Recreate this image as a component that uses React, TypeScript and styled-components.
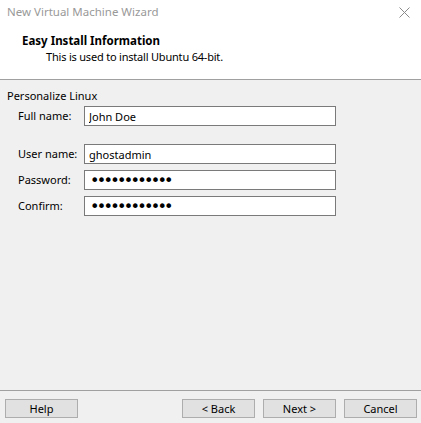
import styled, { createGlobalStyle } from 'styled-components';

const GlobalStyle = createGlobalStyle`
  html, body {
    margin: 0;
    padding: 0;
    background: #f0f0f0;
  }
  body {
    font-family: "Noto Sans", "Open Sans", sans-serif;
    font-size: 11px;
    color: #000;
  }
`;

const Window = styled.div`
  width: 421px;
  height: 423px;
  display: flex;
  flex-direction: column;
  background: #f0f0f0;
  overflow: hidden;
`;

const Header = styled.div`
  height: 79px;
  background: #fff;
  border-bottom: 1px solid #a0a0a0;
  display: flex;
  flex-direction: column;
`;

const TitleBar = styled.div`
  height: 24px;
  display: flex;
  align-items: center;
  justify-content: space-between;
  padding-left: 7px;
`;

const TitleText = styled.span`
  color: #999;
  font-size: 11.5px;
  line-height: 16px;
`;

const CloseButton = styled.button`
  width: 34px;
  height: 24px;
  border: none;
  background: transparent;
  padding: 0;
  display: flex;
  align-items: center;
  justify-content: center;
`;

const HeaderContent = styled.div`
  padding: 9px 0 0 22px;
  line-height: 16px;
`;

const Heading = styled.div`
  font-weight: bold;
  font-size: 11.5px;
`;

const SubHeading = styled.div`
  padding-left: 24px;
  letter-spacing: -0.2px;
`;

const Body = styled.div`
  flex: 1;
  padding: 8px 0 0 7px;
  line-height: 16px;
`;

const Form = styled.div`
  display: flex;
  flex-direction: column;
  gap: 6px;
  padding: 2px 0 0 11px;
`;

const Row = styled.div<{ $spaced?: boolean }>`
  display: flex;
  align-items: center;
  margin-bottom: ${(p) => (p.$spaced ? '12px' : '0')};
`;

const Label = styled.label`
  width: 66px;
`;

const Field = styled.input`
  box-sizing: border-box;
  width: 252px;
  height: 20px;
  margin: 0;
  padding: 0 4px;
  border: 1px solid #7a7a7a;
  background: #fff;
  font: inherit;
  color: #000;
  outline: none;

  &[type='password'] {
    font-family: "DejaVu Sans", sans-serif;
    font-size: 16px;
    letter-spacing: -2.7px;
    padding-left: 5px;
  }
`;

const Footer = styled.div`
  height: 33px;
  box-sizing: border-box;
  border-top: 1px solid #a0a0a0;
  padding: 8px 4px 0 5px;
  display: flex;
  align-items: flex-start;
  gap: 8px;
`;

const Spacer = styled.div`
  flex: 1;
`;

const Button = styled.button`
  box-sizing: border-box;
  width: 73px;
  height: 19px;
  margin: 0;
  padding: 0;
  border: 1px solid #adadad;
  background: #e1e1e1;
  font: inherit;
  line-height: 16px;
  color: #000;
`;

export default function App() {
  return (
    <>
      <GlobalStyle />
      <Window>
        <Header>
          <TitleBar>
            <TitleText>New Virtual Machine Wizard</TitleText>
            <CloseButton aria-label="Close">
              <svg width="11" height="11" viewBox="0 0 11 11">
                <path d="M0.5 0.5 L10.5 10.5 M10.5 0.5 L0.5 10.5" stroke="#8a8a8a" strokeWidth="1" />
              </svg>
            </CloseButton>
          </TitleBar>
          <HeaderContent>
            <Heading>Easy Install Information</Heading>
            <SubHeading>This is used to install Ubuntu 64-bit.</SubHeading>
          </HeaderContent>
        </Header>
        <Body>
          Personalize Linux
          <Form>
            <Row $spaced>
              <Label>Full name:</Label>
              <Field defaultValue="John Doe" />
            </Row>
            <Row>
              <Label>User name:</Label>
              <Field defaultValue="ghostadmin" />
            </Row>
            <Row>
              <Label>Password:</Label>
              <Field type="password" defaultValue="secretpasswd" />
            </Row>
            <Row>
              <Label>Confirm:</Label>
              <Field type="password" defaultValue="secretpasswd" />
            </Row>
          </Form>
        </Body>
        <Footer>
          <Button>Help</Button>
          <Spacer />
          <Button>&lt; Back</Button>
          <Button>Next &gt;</Button>
          <Button>Cancel</Button>
        </Footer>
      </Window>
    </>
  );
}
